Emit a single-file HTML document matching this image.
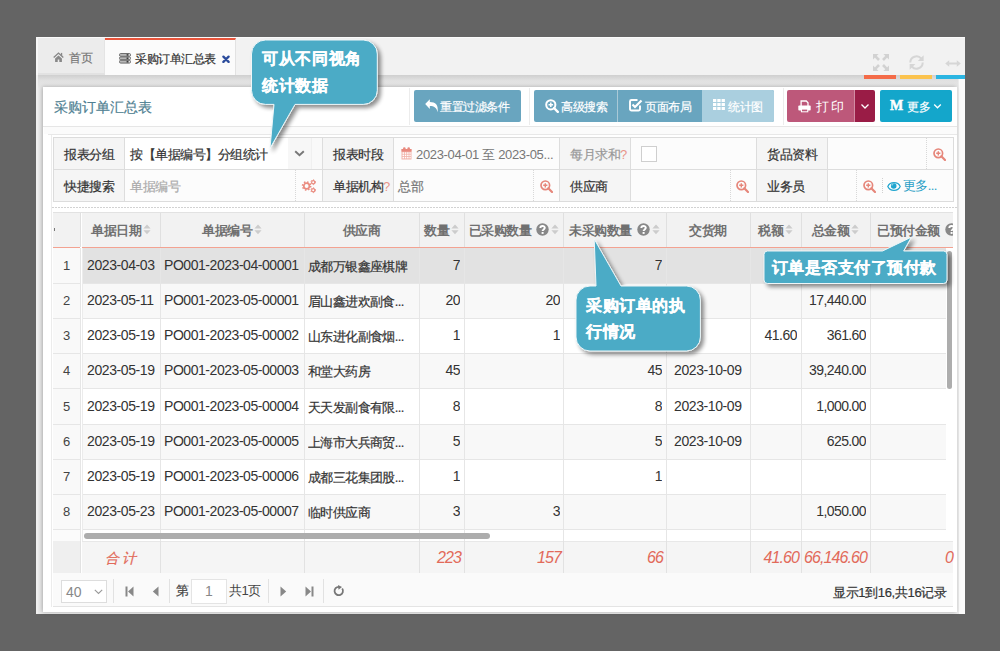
<!DOCTYPE html><html><head><meta charset="utf-8"><style>
*{box-sizing:border-box;margin:0;padding:0}
html,body{width:1000px;height:651px;overflow:hidden;background:#646464;font-family:"Liberation Sans",sans-serif;font-size:13px;color:#333}
.lbl,.cj{-webkit-text-stroke:0.2px currentColor}
div,span,svg{position:absolute}
.t{white-space:nowrap;line-height:20px}
.cj{letter-spacing:-0.5px}
.btn{color:#fff;font-size:12px;line-height:32px;border-radius:2px;white-space:nowrap}
.lbl{background:#f5f5f5;color:#333;font-size:13px;line-height:33px;text-align:left;padding-left:10px;letter-spacing:-0.5px;white-space:nowrap}
.cell{white-space:nowrap;overflow:hidden;line-height:35px;font-size:13px;color:#333}
.th{white-space:nowrap;font-weight:bold;color:#707070;font-size:13px;line-height:35px;letter-spacing:-0.5px}
.ft{white-space:nowrap;font-style:italic;color:#e26a5a;font-size:16px;letter-spacing:-0.9px;line-height:33px;text-align:right}
.call{background:#4ba9c5;color:#fff;font-weight:bold;font-size:16px;white-space:nowrap}
.vl{width:1px;background:#dddddd}
.hl{height:1px;background:#dddddd}
</style></head><body>
<div style="left:36px;top:37px;width:929px;height:577px;background:#f2f2f2;border-top:1px solid #fafafa;border-left:2px solid #f7f7f7"></div>
<div style="left:38px;top:38px;width:67px;height:37px;background:#ececec;border-right:1px solid #e4e4e4;border-bottom:2px solid #e2e2e2"></div>
<div style="left:105px;top:38px;width:131px;height:37px;background:#fbfbfb;border-top:2px solid #e8553c;border-right:1px solid #e2e2e2"></div>
<div style="left:36px;top:75px;width:929px;height:539px;background:linear-gradient(#cfcfcf 0,#d9d9d9 3px,#e0e0e0 5px,#e6e6e6 11px,#ececec 14px);border-left:2px solid #f0f0f0"></div>
<div style="left:958px;top:79px;width:7px;height:535px;background:#fbfbfb;border-left:1px solid #ebebeb"></div>
<div style="left:43px;top:87px;width:914px;height:525px;background:#fff;box-shadow:-1px 0 4px rgba(0,0,0,.28)"></div>
<div style="left:864px;top:75px;width:32px;height:4px;background:#f46b48"></div>
<div style="left:900px;top:75px;width:32px;height:4px;background:#fbc34e"></div>
<div style="left:936px;top:75px;width:29px;height:4px;background:#2bb5e2"></div>
<svg style="left:53px;top:52px" width="11" height="11" viewBox="0 0 11 11"><path d="M0.7 5.6 L5.5 1.1 L10.3 5.6" fill="none" stroke="#888" stroke-width="1.4"/><rect x="7.9" y="0.9" width="1.3" height="3" fill="#888"/><path d="M2.1 6.6 L5.5 3.4 L8.9 6.6 V9.9 H6.3 V7.6 H4.7 V9.9 H2.1 Z" fill="#888"/></svg>
<div class="t cj" style="left:69px;top:48px;font-size:12px;color:#777">首页</div>
<svg style="left:119px;top:52.5px" width="12" height="11" viewBox="0 0 12 11"><rect x="0.5" y="0.5" width="11" height="2.8" rx="1.2" fill="#b8b8b8" stroke="#6e6e6e" stroke-width="1"/><rect x="7.6" y="1.1" width="1.8" height="1.6" fill="#3e3e3e"/><rect x="9.9" y="1.3" width="0.9" height="1.2" fill="#f0f0f0"/><rect x="0.5" y="3.9" width="11" height="2.8" rx="1.2" fill="#b8b8b8" stroke="#6e6e6e" stroke-width="1"/><rect x="7.6" y="4.5" width="1.8" height="1.6" fill="#3e3e3e"/><rect x="9.9" y="4.7" width="0.9" height="1.2" fill="#f0f0f0"/><rect x="0.5" y="7.3" width="11" height="2.8" rx="1.2" fill="#b8b8b8" stroke="#6e6e6e" stroke-width="1"/><rect x="7.6" y="7.8999999999999995" width="1.8" height="1.6" fill="#3e3e3e"/><rect x="9.9" y="8.1" width="0.9" height="1.2" fill="#f0f0f0"/></svg>
<div class="t cj" style="left:135px;top:49px;font-size:12px;color:#333">采购订单汇总表</div>
<svg style="left:221.5px;top:54.5px" width="8" height="8.5" viewBox="0 0 8 8.5"><path d="M1.4 1.6 L6.6 6.9 M6.6 1.6 L1.4 6.9" stroke="#2c4c9c" stroke-width="2.3" stroke-linecap="round"/></svg>
<svg style="left:872.5px;top:54px" width="16" height="17" viewBox="0 0 16 17"><g><path d="M0 0 H5.6 L0 5.6 Z" fill="#d2d2d2"/><path d="M2.2 2.2 L6 6" stroke="#d2d2d2" stroke-width="2.6"/></g><g transform="translate(16,0) scale(-1,1)"><path d="M0 0 H5.6 L0 5.6 Z" fill="#d2d2d2"/><path d="M2.2 2.2 L6 6" stroke="#d2d2d2" stroke-width="2.6"/></g><g transform="translate(0,17) scale(1,-1)"><path d="M0 0 H5.6 L0 5.6 Z" fill="#d2d2d2"/><path d="M2.2 2.2 L6 6" stroke="#d2d2d2" stroke-width="2.6"/></g><g transform="translate(16,17) scale(-1,-1)"><path d="M0 0 H5.6 L0 5.6 Z" fill="#d2d2d2"/><path d="M2.2 2.2 L6 6" stroke="#d2d2d2" stroke-width="2.6"/></g></svg>
<svg style="left:908.5px;top:53.5px" width="16" height="17" viewBox="0 0 16 17"><g fill="none" stroke="#d6d6d6" stroke-width="2"><path d="M1.3 8.5 A6.2 6.2 0 0 1 12.2 4.5"/><path d="M13.7 8.5 A6.2 6.2 0 0 1 2.8 12.5"/></g><path d="M14.6 1.2 V7 H8.8 Z" fill="#d6d6d6"/><path d="M0.6 15.8 V10 H6.4 Z" fill="#d6d6d6"/></svg>
<svg style="left:944.5px;top:59.5px" width="16" height="7" viewBox="0 0 16 7"><path d="M0.2 3.5 L4.2 0.2 V2.5 H11.8 V0.2 L15.8 3.5 L11.8 6.8 V4.5 H4.2 V6.8 Z" fill="#d6d6d6"/></svg>
<div class="t cj" style="left:54px;top:97px;font-size:14px;color:#4f7f92;letter-spacing:0">采购订单汇总表</div>
<div style="left:43px;top:126px;width:914px;height:1px;background:#e6e6e6"></div>
<div style="left:409px;top:88px;width:1px;height:37px;background:#ececec"></div>
<div style="left:529px;top:88px;width:1px;height:37px;background:#ececec"></div>
<div style="left:783px;top:88px;width:1px;height:37px;background:#ececec"></div>
<div class="btn" style="left:414px;top:90px;width:107px;height:32px;background:#69a5bf"></div>
<svg style="left:425px;top:99px" width="14" height="14" viewBox="0 0 14 14"><path d="M0.2 5 L4.8 0.2 V3.1 C10.5 3.1 13.6 6 12.6 13.2 C11.6 8.8 9.2 7 4.8 7 V9.9 Z" fill="#fff"/></svg>
<div class="t cj" style="left:440px;top:97px;font-size:12px;color:#fff">重置过滤条件</div>
<div class="btn" style="left:534px;top:90px;width:240px;height:32px;background:#69a5bf"></div>
<div style="left:617px;top:90px;width:1px;height:32px;background:#a9c9d7"></div>
<div style="left:702px;top:90px;width:72px;height:32px;background:#aacfdf;border-radius:0 2px 2px 0"></div>
<svg style="left:545px;top:99px" width="14" height="14" viewBox="0 0 14 14"><circle cx="5.8" cy="5.8" r="4.6" fill="none" stroke="#fff" stroke-width="2"/><path d="M9 9 L12.8 12.8" stroke="#fff" stroke-width="2.4" stroke-linecap="round"/><path d="M5.8 3.5 V8.1 M3.5 5.8 H8.1" stroke="#fff" stroke-width="1.5"/></svg>
<div class="t cj" style="left:561px;top:97px;font-size:12px;color:#fff">高级搜索</div>
<svg style="left:629px;top:98px" width="14" height="14" viewBox="0 0 14 14"><path d="M11 7.5 V11 A1.5 1.5 0 0 1 9.5 12.5 H2.5 A1.5 1.5 0 0 1 1 11 V3.5 A1.5 1.5 0 0 1 2.5 2 H8.5" fill="none" stroke="#fff" stroke-width="1.9"/><path d="M3.5 6.5 L6 9 L12.5 2.5" fill="none" stroke="#fff" stroke-width="2.2"/></svg>
<div class="t cj" style="left:645px;top:97px;font-size:12px;color:#fff">页面布局</div>
<svg style="left:713px;top:99px" width="12" height="11" viewBox="0 0 12 11"><g fill="#fff"><rect x="0" y="0" width="3.3" height="3"/><rect x="4.3" y="0" width="3.3" height="3"/><rect x="8.6" y="0" width="3.3" height="3"/><rect x="0" y="4" width="3.3" height="3"/><rect x="4.3" y="4" width="3.3" height="3"/><rect x="8.6" y="4" width="3.3" height="3"/><rect x="0" y="8" width="3.3" height="3"/><rect x="4.3" y="8" width="3.3" height="3"/><rect x="8.6" y="8" width="3.3" height="3"/></g></svg>
<div class="t cj" style="left:728px;top:97px;font-size:12px;color:#fff">统计图</div>
<div class="btn" style="left:787px;top:90px;width:67px;height:32px;background:#bd587a;border-radius:2px 0 0 2px"></div>
<div class="btn" style="left:854px;top:90px;width:21px;height:32px;background:#9a1c46;border-left:1px solid #d38ba3;border-radius:0 2px 2px 0"></div>
<svg style="left:797.5px;top:99.5px" width="13" height="13" viewBox="0 0 13 13"><path d="M3.1 6 V1 H8.3 L10 2.7 V6" fill="none" stroke="#fff" stroke-width="1.3"/><rect x="0.3" y="5.6" width="12.4" height="4.8" rx="0.9" fill="#fff"/><rect x="2.9" y="8.6" width="7.4" height="3.7" fill="#fff"/><rect x="4" y="9.6" width="5.2" height="1.7" fill="#bd587a"/></svg>
<div class="t" style="left:816px;top:97px;font-size:13px;color:#fff;letter-spacing:2px">打印</div>
<svg style="left:860px;top:103px" width="10" height="7" viewBox="0 0 10 7"><path d="M1.5 1.5 L5 5 L8.5 1.5" fill="none" stroke="#fff" stroke-width="1.3"/></svg>
<div class="btn" style="left:880px;top:90px;width:72px;height:32px;background:#14a6cb"></div>
<div class="t" style="left:890px;top:96px;font-size:14px;color:#fff;font-family:'Liberation Serif',serif;font-weight:bold;-webkit-text-stroke:0.5px #fff">M</div>
<div class="t cj" style="left:907px;top:97px;font-size:12px;color:#fff">更多</div>
<svg style="left:933px;top:103px" width="9" height="7" viewBox="0 0 9 7"><path d="M1.2 1.5 L4.5 4.8 L7.8 1.5" fill="none" stroke="#fff" stroke-width="1.3"/></svg>
<div style="left:44px;top:127px;width:913px;height:7px;background:#fbfbfb"></div>
<div style="left:48px;top:134px;width:909px;height:1px;background:#e8e8e8"></div>
<div style="left:51px;top:135px;width:1px;height:472px;background:#ececec"></div>
<div style="left:53px;top:137px;width:901px;height:65px;border:1px solid #dcdcdc;background:#fcfcfc"></div>
<div style="left:52px;top:207px;width:905px;height:1px;background:repeating-linear-gradient(90deg,#d2d2d2 0 2px,transparent 2px 3px)"></div>
<div class="lbl" style="left:54px;top:138px;width:70px;height:31px;color:#333">报表分组</div>
<div class="lbl" style="left:54px;top:170px;width:70px;height:31px;color:#333">快捷搜索</div>
<div class="lbl" style="left:323px;top:138px;width:70px;height:31px;color:#333">报表时段</div>
<div class="lbl" style="left:323px;top:170px;width:70px;height:31px;color:#333">单据机构<span style="position:static;color:#e8958a;-webkit-text-stroke:0">?</span></div>
<div class="lbl" style="left:560px;top:138px;width:70px;height:31px;color:#999">每月求和<span style="position:static;color:#e8958a;-webkit-text-stroke:0">?</span></div>
<div class="lbl" style="left:560px;top:170px;width:70px;height:31px;color:#333">供应商</div>
<div class="lbl" style="left:757px;top:138px;width:70px;height:31px;color:#333">货品资料</div>
<div class="lbl" style="left:757px;top:170px;width:70px;height:31px;color:#333">业务员</div>
<div style="left:54px;top:169px;width:899px;height:1px;background:#dddddd"></div>
<div style="left:124px;top:138px;width:1px;height:63px;background:#dddddd"></div>
<div style="left:322px;top:138px;width:1px;height:63px;background:#dddddd"></div>
<div style="left:393px;top:138px;width:1px;height:63px;background:#dddddd"></div>
<div style="left:559px;top:138px;width:1px;height:63px;background:#dddddd"></div>
<div style="left:630px;top:138px;width:1px;height:63px;background:#dddddd"></div>
<div style="left:756px;top:138px;width:1px;height:63px;background:#dddddd"></div>
<div style="left:827px;top:138px;width:1px;height:63px;background:#dddddd"></div>
<div style="left:125px;top:138px;width:197px;height:31px;background:#fff"></div>
<div class="t cj" style="left:130px;top:145px;font-size:13px;color:#333">按【单据编号】分组统计</div>
<div style="left:288px;top:138px;width:23px;height:31px;background:#f7f7f7"></div>
<div style="left:311px;top:138px;width:11px;height:31px;background:#f9f9f9;border-left:1px solid #f0f0f0"></div>
<svg style="left:294px;top:150px" width="11" height="7" viewBox="0 0 11 7"><path d="M1.2 1.2 L5.5 5.3 L9.8 1.2" fill="none" stroke="#777" stroke-width="1.9"/></svg>
<div style="left:295px;top:170px;width:0;height:31px;border-left:1px dotted #d8d8d8"></div>
<div style="left:533px;top:170px;width:0;height:31px;border-left:1px dotted #d8d8d8"></div>
<div style="left:730px;top:170px;width:0;height:31px;border-left:1px dotted #d8d8d8"></div>
<div style="left:926px;top:138px;width:0;height:31px;border-left:1px dotted #d8d8d8"></div>
<div style="left:856px;top:170px;width:0;height:31px;border-left:1px dotted #d8d8d8"></div>
<div class="t cj" style="left:130px;top:177px;font-size:13px;color:#aaa">单据编号</div>
<svg style="left:300px;top:179px" width="16" height="15" viewBox="0 0 16 15"><g fill="none" stroke="#ea8c80"><circle cx="6.6" cy="7" r="2.8" stroke-width="1.7"/><circle cx="6.6" cy="7" r="4.1" stroke-width="1.5" stroke-dasharray="1.5 1.72"/><circle cx="13.2" cy="3.2" r="1.6" stroke-width="1.2"/><circle cx="13.2" cy="3.2" r="2.4" stroke-width="1" stroke-dasharray="1.1 1.4"/><circle cx="13.2" cy="11.2" r="1.6" stroke-width="1.2"/><circle cx="13.2" cy="11.2" r="2.4" stroke-width="1" stroke-dasharray="1.1 1.4"/></g></svg>
<div style="left:882px;top:178px;width:0;height:15px;border-left:1px dotted #d0d0d0"></div>
<svg style="left:401px;top:147px" width="11" height="13" viewBox="0 0 11 13"><rect x="0.5" y="2" width="10" height="10.5" rx="0.6" fill="#f2b3a9"/><rect x="0.5" y="2" width="10" height="2.6" fill="#e8897e"/><g fill="#fff"><rect x="1.5" y="5.3" width="1.5" height="1.5"/><rect x="3.8" y="5.3" width="1.5" height="1.5"/><rect x="6.1" y="5.3" width="1.5" height="1.5"/><rect x="8.4" y="5.3" width="1.3" height="1.5"/><rect x="1.5" y="7.6" width="1.5" height="1.5"/><rect x="3.8" y="7.6" width="1.5" height="1.5"/><rect x="6.1" y="7.6" width="1.5" height="1.5"/><rect x="8.4" y="7.6" width="1.3" height="1.5"/><rect x="1.5" y="9.9" width="1.5" height="1.5"/><rect x="3.8" y="9.9" width="1.5" height="1.5"/><rect x="6.1" y="9.9" width="1.5" height="1.5"/><rect x="8.4" y="9.9" width="1.3" height="1.5"/></g><circle cx="3.3" cy="1.6" r="1.3" fill="#e8897e"/><circle cx="7.7" cy="1.6" r="1.3" fill="#e8897e"/></svg>
<div class="t" style="left:416px;top:145px;font-size:13px;color:#777;letter-spacing:-0.35px">2023-04-01 至 2023-05...</div>
<div style="left:641px;top:146px;width:16px;height:16px;border:1px solid #cfcfcf;background:#fff"></div>
<svg style="left:540px;top:180px" width="13" height="13" viewBox="0 0 13 13"><circle cx="5.3" cy="5.3" r="4.3" fill="none" stroke="#e6867a" stroke-width="1.7"/><path d="M8.3 8.3 L12 12" stroke="#e6867a" stroke-width="2.2" stroke-linecap="round"/><path d="M5.3 3.2 V7.4 M3.2 5.3 H7.4" stroke="#e6867a" stroke-width="1.4"/></svg>
<svg style="left:736px;top:180px" width="13" height="13" viewBox="0 0 13 13"><circle cx="5.3" cy="5.3" r="4.3" fill="none" stroke="#e6867a" stroke-width="1.7"/><path d="M8.3 8.3 L12 12" stroke="#e6867a" stroke-width="2.2" stroke-linecap="round"/><path d="M5.3 3.2 V7.4 M3.2 5.3 H7.4" stroke="#e6867a" stroke-width="1.4"/></svg>
<svg style="left:933px;top:148px" width="13" height="13" viewBox="0 0 13 13"><circle cx="5.3" cy="5.3" r="4.3" fill="none" stroke="#e6867a" stroke-width="1.7"/><path d="M8.3 8.3 L12 12" stroke="#e6867a" stroke-width="2.2" stroke-linecap="round"/><path d="M5.3 3.2 V7.4 M3.2 5.3 H7.4" stroke="#e6867a" stroke-width="1.4"/></svg>
<svg style="left:863px;top:180px" width="13" height="13" viewBox="0 0 13 13"><circle cx="5.3" cy="5.3" r="4.3" fill="none" stroke="#e6867a" stroke-width="1.7"/><path d="M8.3 8.3 L12 12" stroke="#e6867a" stroke-width="2.2" stroke-linecap="round"/><path d="M5.3 3.2 V7.4 M3.2 5.3 H7.4" stroke="#e6867a" stroke-width="1.4"/></svg>
<div class="t cj" style="left:398px;top:177px;font-size:13px;color:#777">总部</div>
<svg style="left:886.5px;top:181px" width="14" height="11" viewBox="0 0 14 11"><path d="M0.8 5.5 C3 0.4 11 0.4 13.2 5.5 C11 10.6 3 10.6 0.8 5.5 Z" fill="none" stroke="#1fa5cf" stroke-width="1.2"/><circle cx="6.7" cy="5" r="2.8" fill="#1fa5cf"/><path d="M5 4.6 A1.8 1.8 0 0 1 6.4 3" fill="none" stroke="#bfe6f2" stroke-width="0.8"/></svg>
<div class="t" style="left:903px;top:176px;font-size:13px;color:#2a9fc6;letter-spacing:-0.6px">更多...</div>
<div style="left:53px;top:212px;width:900px;height:35px;background:#f2f2f2;border-top:1px solid #e2e2e2"></div>
<div style="left:53px;top:247px;width:900px;height:1px;background:#f3a291"></div>
<div style="left:80px;top:247px;width:2px;height:1px;background:#fff"></div>
<div style="left:54px;top:228px;width:1px;height:3px;background:#777"></div>
<div style="left:80px;top:213px;width:1px;height:34px;background:#e0e0e0"></div>
<div style="left:160px;top:213px;width:1px;height:34px;background:#e0e0e0"></div>
<div style="left:304px;top:213px;width:1px;height:34px;background:#e0e0e0"></div>
<div style="left:419px;top:213px;width:1px;height:34px;background:#e0e0e0"></div>
<div style="left:464px;top:213px;width:1px;height:34px;background:#e0e0e0"></div>
<div style="left:563px;top:213px;width:1px;height:34px;background:#e0e0e0"></div>
<div style="left:666px;top:213px;width:1px;height:34px;background:#e0e0e0"></div>
<div style="left:750px;top:213px;width:1px;height:34px;background:#e0e0e0"></div>
<div style="left:801px;top:213px;width:1px;height:34px;background:#e0e0e0"></div>
<div style="left:870px;top:213px;width:1px;height:34px;background:#e0e0e0"></div>
<div style="left:81px;top:213px;width:1px;height:34px;background:#fff"></div>
<div style="left:53px;top:248px;width:27px;height:36px;background:#f9f9f9;border-bottom:1px solid #e6e6e6"></div>
<div style="left:82px;top:248px;width:864px;height:36px;background:#e2e2e2;border-bottom:1px solid #e6e6e6"></div>
<div class="cell" style="left:53px;top:248px;width:27px;text-align:center;color:#444">1</div>
<div class="cell" style="left:87px;top:248px;width:73px;color:#333;font-size:14px;letter-spacing:-0.4px">2023-04-03</div>
<div class="cell" style="left:164px;top:248px;width:140px;color:#333;font-size:14px;letter-spacing:-0.45px">PO001-2023-04-00001</div>
<div class="cell" style="left:308px;top:249px;width:111px;color:#333;letter-spacing:-0.6px;-webkit-text-stroke:0.2px #333">成都万银鑫座棋牌</div>
<div class="cell" style="left:419px;top:248px;width:41px;text-align:right;font-size:14px;letter-spacing:-0.5px">7</div>
<div class="cell" style="left:464px;top:248px;width:96px;text-align:right;font-size:14px;letter-spacing:-0.5px"></div>
<div class="cell" style="left:563px;top:248px;width:99px;text-align:right;font-size:14px;letter-spacing:-0.5px">7</div>
<div class="cell" style="left:674px;top:248px;width:76px;font-size:14px;letter-spacing:-0.4px"></div>
<div class="cell" style="left:750px;top:248px;width:47px;text-align:right;font-size:14px;letter-spacing:-0.5px"></div>
<div class="cell" style="left:801px;top:248px;width:65px;text-align:right;font-size:14px;letter-spacing:-0.6px"></div>
<div style="left:53px;top:284px;width:27px;height:35px;background:#f9f9f9;border-bottom:1px solid #e6e6e6"></div>
<div style="left:82px;top:284px;width:864px;height:35px;background:#f8f8f8;border-bottom:1px solid #e6e6e6"></div>
<div class="cell" style="left:53px;top:283px;width:27px;text-align:center;color:#444">2</div>
<div class="cell" style="left:87px;top:283px;width:73px;color:#333;font-size:14px;letter-spacing:-0.4px">2023-05-11</div>
<div class="cell" style="left:164px;top:283px;width:140px;color:#333;font-size:14px;letter-spacing:-0.45px">PO001-2023-05-00001</div>
<div class="cell" style="left:308px;top:284px;width:111px;color:#333;letter-spacing:-0.6px;-webkit-text-stroke:0.2px #333">眉山鑫进欢副食...</div>
<div class="cell" style="left:419px;top:283px;width:41px;text-align:right;font-size:14px;letter-spacing:-0.5px">20</div>
<div class="cell" style="left:464px;top:283px;width:96px;text-align:right;font-size:14px;letter-spacing:-0.5px">20</div>
<div class="cell" style="left:563px;top:283px;width:99px;text-align:right;font-size:14px;letter-spacing:-0.5px"></div>
<div class="cell" style="left:674px;top:283px;width:76px;font-size:14px;letter-spacing:-0.4px"></div>
<div class="cell" style="left:750px;top:283px;width:47px;text-align:right;font-size:14px;letter-spacing:-0.5px"></div>
<div class="cell" style="left:801px;top:283px;width:65px;text-align:right;font-size:14px;letter-spacing:-0.6px">17,440.00</div>
<div style="left:53px;top:319px;width:27px;height:35px;background:#f9f9f9;border-bottom:1px solid #e6e6e6"></div>
<div style="left:82px;top:319px;width:864px;height:35px;background:#ffffff;border-bottom:1px solid #e6e6e6"></div>
<div class="cell" style="left:53px;top:318px;width:27px;text-align:center;color:#444">3</div>
<div class="cell" style="left:87px;top:318px;width:73px;color:#333;font-size:14px;letter-spacing:-0.4px">2023-05-19</div>
<div class="cell" style="left:164px;top:318px;width:140px;color:#333;font-size:14px;letter-spacing:-0.45px">PO001-2023-05-00002</div>
<div class="cell" style="left:308px;top:319px;width:111px;color:#333;letter-spacing:-0.6px;-webkit-text-stroke:0.2px #333">山东进化副食烟...</div>
<div class="cell" style="left:419px;top:318px;width:41px;text-align:right;font-size:14px;letter-spacing:-0.5px">1</div>
<div class="cell" style="left:464px;top:318px;width:96px;text-align:right;font-size:14px;letter-spacing:-0.5px">1</div>
<div class="cell" style="left:563px;top:318px;width:99px;text-align:right;font-size:14px;letter-spacing:-0.5px"></div>
<div class="cell" style="left:674px;top:318px;width:76px;font-size:14px;letter-spacing:-0.4px"></div>
<div class="cell" style="left:750px;top:318px;width:47px;text-align:right;font-size:14px;letter-spacing:-0.5px">41.60</div>
<div class="cell" style="left:801px;top:318px;width:65px;text-align:right;font-size:14px;letter-spacing:-0.6px">361.60</div>
<div style="left:53px;top:354px;width:27px;height:35px;background:#f9f9f9;border-bottom:1px solid #e6e6e6"></div>
<div style="left:82px;top:354px;width:864px;height:35px;background:#f8f8f8;border-bottom:1px solid #e6e6e6"></div>
<div class="cell" style="left:53px;top:353px;width:27px;text-align:center;color:#444">4</div>
<div class="cell" style="left:87px;top:353px;width:73px;color:#333;font-size:14px;letter-spacing:-0.4px">2023-05-19</div>
<div class="cell" style="left:164px;top:353px;width:140px;color:#333;font-size:14px;letter-spacing:-0.45px">PO001-2023-05-00003</div>
<div class="cell" style="left:308px;top:354px;width:111px;color:#333;letter-spacing:-0.6px;-webkit-text-stroke:0.2px #333">和堂大药房</div>
<div class="cell" style="left:419px;top:353px;width:41px;text-align:right;font-size:14px;letter-spacing:-0.5px">45</div>
<div class="cell" style="left:464px;top:353px;width:96px;text-align:right;font-size:14px;letter-spacing:-0.5px"></div>
<div class="cell" style="left:563px;top:353px;width:99px;text-align:right;font-size:14px;letter-spacing:-0.5px">45</div>
<div class="cell" style="left:674px;top:353px;width:76px;font-size:14px;letter-spacing:-0.4px">2023-10-09</div>
<div class="cell" style="left:750px;top:353px;width:47px;text-align:right;font-size:14px;letter-spacing:-0.5px"></div>
<div class="cell" style="left:801px;top:353px;width:65px;text-align:right;font-size:14px;letter-spacing:-0.6px">39,240.00</div>
<div style="left:53px;top:389px;width:27px;height:36px;background:#f9f9f9;border-bottom:1px solid #e6e6e6"></div>
<div style="left:82px;top:389px;width:864px;height:36px;background:#ffffff;border-bottom:1px solid #e6e6e6"></div>
<div class="cell" style="left:53px;top:389px;width:27px;text-align:center;color:#444">5</div>
<div class="cell" style="left:87px;top:389px;width:73px;color:#333;font-size:14px;letter-spacing:-0.4px">2023-05-19</div>
<div class="cell" style="left:164px;top:389px;width:140px;color:#333;font-size:14px;letter-spacing:-0.45px">PO001-2023-05-00004</div>
<div class="cell" style="left:308px;top:390px;width:111px;color:#333;letter-spacing:-0.6px;-webkit-text-stroke:0.2px #333">天天发副食有限...</div>
<div class="cell" style="left:419px;top:389px;width:41px;text-align:right;font-size:14px;letter-spacing:-0.5px">8</div>
<div class="cell" style="left:464px;top:389px;width:96px;text-align:right;font-size:14px;letter-spacing:-0.5px"></div>
<div class="cell" style="left:563px;top:389px;width:99px;text-align:right;font-size:14px;letter-spacing:-0.5px">8</div>
<div class="cell" style="left:674px;top:389px;width:76px;font-size:14px;letter-spacing:-0.4px">2023-10-09</div>
<div class="cell" style="left:750px;top:389px;width:47px;text-align:right;font-size:14px;letter-spacing:-0.5px"></div>
<div class="cell" style="left:801px;top:389px;width:65px;text-align:right;font-size:14px;letter-spacing:-0.6px">1,000.00</div>
<div style="left:53px;top:425px;width:27px;height:35px;background:#f9f9f9;border-bottom:1px solid #e6e6e6"></div>
<div style="left:82px;top:425px;width:864px;height:35px;background:#f8f8f8;border-bottom:1px solid #e6e6e6"></div>
<div class="cell" style="left:53px;top:424px;width:27px;text-align:center;color:#444">6</div>
<div class="cell" style="left:87px;top:424px;width:73px;color:#333;font-size:14px;letter-spacing:-0.4px">2023-05-19</div>
<div class="cell" style="left:164px;top:424px;width:140px;color:#333;font-size:14px;letter-spacing:-0.45px">PO001-2023-05-00005</div>
<div class="cell" style="left:308px;top:425px;width:111px;color:#333;letter-spacing:-0.6px;-webkit-text-stroke:0.2px #333">上海市大兵商贸...</div>
<div class="cell" style="left:419px;top:424px;width:41px;text-align:right;font-size:14px;letter-spacing:-0.5px">5</div>
<div class="cell" style="left:464px;top:424px;width:96px;text-align:right;font-size:14px;letter-spacing:-0.5px"></div>
<div class="cell" style="left:563px;top:424px;width:99px;text-align:right;font-size:14px;letter-spacing:-0.5px">5</div>
<div class="cell" style="left:674px;top:424px;width:76px;font-size:14px;letter-spacing:-0.4px">2023-10-09</div>
<div class="cell" style="left:750px;top:424px;width:47px;text-align:right;font-size:14px;letter-spacing:-0.5px"></div>
<div class="cell" style="left:801px;top:424px;width:65px;text-align:right;font-size:14px;letter-spacing:-0.6px">625.00</div>
<div style="left:53px;top:460px;width:27px;height:35px;background:#f9f9f9;border-bottom:1px solid #e6e6e6"></div>
<div style="left:82px;top:460px;width:864px;height:35px;background:#ffffff;border-bottom:1px solid #e6e6e6"></div>
<div class="cell" style="left:53px;top:459px;width:27px;text-align:center;color:#444">7</div>
<div class="cell" style="left:87px;top:459px;width:73px;color:#333;font-size:14px;letter-spacing:-0.4px">2023-05-19</div>
<div class="cell" style="left:164px;top:459px;width:140px;color:#333;font-size:14px;letter-spacing:-0.45px">PO001-2023-05-00006</div>
<div class="cell" style="left:308px;top:460px;width:111px;color:#333;letter-spacing:-0.6px;-webkit-text-stroke:0.2px #333">成都三花集团股...</div>
<div class="cell" style="left:419px;top:459px;width:41px;text-align:right;font-size:14px;letter-spacing:-0.5px">1</div>
<div class="cell" style="left:464px;top:459px;width:96px;text-align:right;font-size:14px;letter-spacing:-0.5px"></div>
<div class="cell" style="left:563px;top:459px;width:99px;text-align:right;font-size:14px;letter-spacing:-0.5px">1</div>
<div class="cell" style="left:674px;top:459px;width:76px;font-size:14px;letter-spacing:-0.4px"></div>
<div class="cell" style="left:750px;top:459px;width:47px;text-align:right;font-size:14px;letter-spacing:-0.5px"></div>
<div class="cell" style="left:801px;top:459px;width:65px;text-align:right;font-size:14px;letter-spacing:-0.6px"></div>
<div style="left:53px;top:495px;width:27px;height:35px;background:#f9f9f9;border-bottom:1px solid #e6e6e6"></div>
<div style="left:82px;top:495px;width:864px;height:35px;background:#f8f8f8;border-bottom:1px solid #e6e6e6"></div>
<div class="cell" style="left:53px;top:494px;width:27px;text-align:center;color:#444">8</div>
<div class="cell" style="left:87px;top:494px;width:73px;color:#333;font-size:14px;letter-spacing:-0.4px">2023-05-23</div>
<div class="cell" style="left:164px;top:494px;width:140px;color:#333;font-size:14px;letter-spacing:-0.45px">PO001-2023-05-00007</div>
<div class="cell" style="left:308px;top:495px;width:111px;color:#333;letter-spacing:-0.6px;-webkit-text-stroke:0.2px #333">临时供应商</div>
<div class="cell" style="left:419px;top:494px;width:41px;text-align:right;font-size:14px;letter-spacing:-0.5px">3</div>
<div class="cell" style="left:464px;top:494px;width:96px;text-align:right;font-size:14px;letter-spacing:-0.5px">3</div>
<div class="cell" style="left:563px;top:494px;width:99px;text-align:right;font-size:14px;letter-spacing:-0.5px"></div>
<div class="cell" style="left:674px;top:494px;width:76px;font-size:14px;letter-spacing:-0.4px"></div>
<div class="cell" style="left:750px;top:494px;width:47px;text-align:right;font-size:14px;letter-spacing:-0.5px"></div>
<div class="cell" style="left:801px;top:494px;width:65px;text-align:right;font-size:14px;letter-spacing:-0.6px">1,050.00</div>
<div style="left:82px;top:530px;width:871px;height:11px;background:#fff"></div>
<div style="left:80px;top:248px;width:1px;height:293px;background:#e6e6e6"></div>
<div style="left:160px;top:248px;width:1px;height:293px;background:#e6e6e6"></div>
<div style="left:304px;top:248px;width:1px;height:293px;background:#e6e6e6"></div>
<div style="left:419px;top:248px;width:1px;height:293px;background:#e6e6e6"></div>
<div style="left:464px;top:248px;width:1px;height:293px;background:#e6e6e6"></div>
<div style="left:563px;top:248px;width:1px;height:293px;background:#e6e6e6"></div>
<div style="left:666px;top:248px;width:1px;height:293px;background:#e6e6e6"></div>
<div style="left:750px;top:248px;width:1px;height:293px;background:#e6e6e6"></div>
<div style="left:801px;top:248px;width:1px;height:293px;background:#e6e6e6"></div>
<div style="left:870px;top:248px;width:1px;height:293px;background:#e6e6e6"></div>
<div style="left:81px;top:248px;width:1px;height:293px;background:#fff"></div>
<div style="left:82px;top:248px;width:1px;height:293px;background:#ececec"></div>
<div style="left:53px;top:530px;width:27px;height:11px;background:#fbfbfb"></div>
<div style="left:946px;top:248px;width:7px;height:282px;background:#fff"></div>
<div style="left:947px;top:251px;width:5px;height:138px;background:#adadad;border-radius:3px"></div>
<div style="left:84px;top:533px;width:406px;height:6px;background:#adadad;border-radius:3px"></div>
<div style="left:53px;top:541px;width:900px;height:33px;background:#f5f5f5;border-top:1px solid #e8e8e8;border-bottom:1px solid #e4e4e4"></div>
<div style="left:53px;top:541px;width:27px;height:32px;background:#efefef"></div>
<div style="left:80px;top:541px;width:1px;height:32px;background:#e2e2e2"></div>
<div style="left:160px;top:541px;width:1px;height:32px;background:#e2e2e2"></div>
<div style="left:304px;top:541px;width:1px;height:32px;background:#e2e2e2"></div>
<div style="left:419px;top:541px;width:1px;height:32px;background:#e2e2e2"></div>
<div style="left:464px;top:541px;width:1px;height:32px;background:#e2e2e2"></div>
<div style="left:563px;top:541px;width:1px;height:32px;background:#e2e2e2"></div>
<div style="left:666px;top:541px;width:1px;height:32px;background:#e2e2e2"></div>
<div style="left:750px;top:541px;width:1px;height:32px;background:#e2e2e2"></div>
<div style="left:801px;top:541px;width:1px;height:32px;background:#e2e2e2"></div>
<div style="left:870px;top:541px;width:1px;height:32px;background:#e2e2e2"></div>
<div style="left:81px;top:541px;width:1px;height:32px;background:#fff"></div>
<div class="ft cj" style="left:83px;top:542px;width:78px;text-align:center;font-size:14px;letter-spacing:3px;color:#e26a5a">合计</div>
<div class="ft" style="left:419px;top:541px;width:42px">223</div>
<div class="ft" style="left:464px;top:541px;width:97px">157</div>
<div class="ft" style="left:563px;top:541px;width:100px">66</div>
<div class="ft" style="left:750px;top:541px;width:49px">41.60</div>
<div class="ft" style="left:801px;top:541px;width:66px">66,146.60</div>
<div class="ft" style="left:870px;top:541px;width:83px">0</div>
<div style="left:53px;top:573px;width:900px;height:34px;background:#fafafa;border-bottom:1px solid #e4e4e4"></div>
<div style="left:61px;top:580px;width:46px;height:23px;border:1px solid #dddddd;background:#fff"></div>
<div class="t" style="left:66px;top:582px;font-size:14px;color:#888">40</div>
<svg style="left:94px;top:589px" width="9" height="6" viewBox="0 0 9 6"><path d="M0.8 0.8 L4.5 4.5 L8.2 0.8" fill="none" stroke="#999" stroke-width="1.1"/></svg>
<div style="left:113px;top:579px;width:1px;height:24px;background:#e2e2e2"></div>
<div style="left:169px;top:579px;width:1px;height:24px;background:#e2e2e2"></div>
<div style="left:268px;top:579px;width:1px;height:24px;background:#e2e2e2"></div>
<div style="left:323px;top:579px;width:1px;height:24px;background:#e2e2e2"></div>
<svg style="left:125px;top:586px" width="9" height="11" viewBox="0 0 9 11"><rect x="0.5" y="0.5" width="2" height="10" fill="#888"/><path d="M8.5 0.5 V10.5 L3 5.5 Z" fill="#888"/></svg>
<svg style="left:152px;top:586px" width="7" height="11" viewBox="0 0 7 11"><path d="M6.5 0.5 V10.5 L0.8 5.5 Z" fill="#888"/></svg>
<div class="t cj" style="left:176px;top:581px;font-size:13px;color:#444">第</div>
<div style="left:191px;top:579px;width:36px;height:25px;border:1px solid #e4e4e4;background:#fff"></div>
<div class="t" style="left:191px;top:581px;width:36px;text-align:center;font-size:14px;color:#888">1</div>
<div class="t" style="left:229px;top:581px;font-size:13px;color:#444;letter-spacing:-0.5px">共1页</div>
<svg style="left:280px;top:586px" width="7" height="11" viewBox="0 0 7 11"><path d="M0.5 0.5 V10.5 L6.2 5.5 Z" fill="#888"/></svg>
<svg style="left:305px;top:586px" width="9" height="11" viewBox="0 0 9 11"><path d="M0.5 0.5 V10.5 L6 5.5 Z" fill="#888"/><rect x="6.5" y="0.5" width="2" height="10" fill="#888"/></svg>
<svg style="left:333px;top:585px" width="12" height="12" viewBox="0 0 12 12"><path d="M9.2 3.6 A4.2 4.2 0 1 1 6 1.8" fill="none" stroke="#777" stroke-width="1.8"/><path d="M5 0 L9 2 L5.5 4.8 Z" fill="#777"/></svg>
<div class="t cj" style="left:833px;top:583px;font-size:13px;color:#333;letter-spacing:-0.35px">显示1到16,共16记录</div>
<div class="th" style="left:82px;top:213px;width:78px;height:34px;display:flex;align-items:center;justify-content:center"><span style="position:static">单据日期</span><svg style="position:static;margin-left:2px;margin-top:-2px" width="8" height="11" viewBox="0 0 8 11"><path d="M4 0.5 L7.6 4.5 H0.4 Z M0.4 6.2 H7.6 L4 10.3 Z" fill="#cccccc"/></svg></div>
<div class="th" style="left:160px;top:213px;width:144px;height:34px;display:flex;align-items:center;justify-content:center"><span style="position:static">单据编号</span><svg style="position:static;margin-left:2px;margin-top:-2px" width="8" height="11" viewBox="0 0 8 11"><path d="M4 0.5 L7.6 4.5 H0.4 Z M0.4 6.2 H7.6 L4 10.3 Z" fill="#cccccc"/></svg></div>
<div class="th" style="left:304px;top:213px;width:115px;height:34px;display:flex;align-items:center;justify-content:center"><span style="position:static">供应商</span></div>
<div class="th" style="left:419px;top:213px;width:45px;height:34px;display:flex;align-items:center;justify-content:center"><span style="position:static">数量</span><svg style="position:static;margin-left:2px;margin-top:-2px" width="8" height="11" viewBox="0 0 8 11"><path d="M4 0.5 L7.6 4.5 H0.4 Z M0.4 6.2 H7.6 L4 10.3 Z" fill="#cccccc"/></svg></div>
<div class="th" style="left:464px;top:213px;width:100px;height:34px;display:flex;align-items:center;justify-content:center"><span style="position:static">已采购数量</span><svg style="position:static;margin-left:5px;margin-top:-2px" width="13" height="13" viewBox="0 0 13 13"><circle cx="6.5" cy="6.5" r="6.2" fill="#888"/><path d="M4.3 5 C4.3 2.3 8.8 2.3 8.8 4.8 C8.8 6.4 6.6 6.4 6.6 8" fill="none" stroke="#fff" stroke-width="1.9"/><rect x="5.6" y="9" width="2" height="1.9" fill="#fff"/></svg><svg style="position:static;margin-left:2px;margin-top:-2px" width="8" height="11" viewBox="0 0 8 11"><path d="M4 0.5 L7.6 4.5 H0.4 Z M0.4 6.2 H7.6 L4 10.3 Z" fill="#cccccc"/></svg></div>
<div class="th" style="left:563px;top:213px;width:103px;height:34px;display:flex;align-items:center;justify-content:center"><span style="position:static">未采购数量</span><svg style="position:static;margin-left:5px;margin-top:-2px" width="13" height="13" viewBox="0 0 13 13"><circle cx="6.5" cy="6.5" r="6.2" fill="#888"/><path d="M4.3 5 C4.3 2.3 8.8 2.3 8.8 4.8 C8.8 6.4 6.6 6.4 6.6 8" fill="none" stroke="#fff" stroke-width="1.9"/><rect x="5.6" y="9" width="2" height="1.9" fill="#fff"/></svg><svg style="position:static;margin-left:2px;margin-top:-2px" width="8" height="11" viewBox="0 0 8 11"><path d="M4 0.5 L7.6 4.5 H0.4 Z M0.4 6.2 H7.6 L4 10.3 Z" fill="#cccccc"/></svg></div>
<div class="th" style="left:666px;top:213px;width:84px;height:34px;display:flex;align-items:center;justify-content:center"><span style="position:static">交货期</span></div>
<div class="th" style="left:750px;top:213px;width:51px;height:34px;display:flex;align-items:center;justify-content:center"><span style="position:static">税额</span><svg style="position:static;margin-left:2px;margin-top:-2px" width="8" height="11" viewBox="0 0 8 11"><path d="M4 0.5 L7.6 4.5 H0.4 Z M0.4 6.2 H7.6 L4 10.3 Z" fill="#cccccc"/></svg></div>
<div class="th" style="left:801px;top:213px;width:69px;height:34px;display:flex;align-items:center;justify-content:center"><span style="position:static">总金额</span><svg style="position:static;margin-left:2px;margin-top:-2px" width="8" height="11" viewBox="0 0 8 11"><path d="M4 0.5 L7.6 4.5 H0.4 Z M0.4 6.2 H7.6 L4 10.3 Z" fill="#cccccc"/></svg></div>
<div style="left:870px;top:213px;width:83px;height:34px;overflow:hidden"><div class="th" style="left:7px;top:0;height:34px;display:flex;align-items:center"><span style="position:static">已预付金额</span><svg style="position:static;margin-left:5px;margin-top:-2px" width="13" height="13" viewBox="0 0 13 13"><circle cx="6.5" cy="6.5" r="6.2" fill="#888"/><path d="M4.3 5 C4.3 2.3 8.8 2.3 8.8 4.8 C8.8 6.4 6.6 6.4 6.6 8" fill="none" stroke="#fff" stroke-width="1.9"/><rect x="5.6" y="9" width="2" height="1.9" fill="#fff"/></svg></div></div>
<svg style="left:0;top:0" width="1000" height="651" viewBox="0 0 1000 651"><defs><filter id="sh" x="-20%" y="-20%" width="140%" height="140%"><feGaussianBlur in="SourceAlpha" stdDeviation="2"/><feOffset dx="3" dy="3"/><feComponentTransfer><feFuncA type="linear" slope="0.45"/></feComponentTransfer><feMerge><feMergeNode/><feMergeNode in="SourceGraphic"/></feMerge></filter></defs><path d="M265.5 40 H363.3 A14 14 0 0 1 377.3 54 V90.4 A14 14 0 0 1 363.3 104.4 H295 L270 148.3 L274 104.4 H265.5 A14 14 0 0 1 251.5 90.4 V54 A14 14 0 0 1 265.5 40 Z" fill="#4babc6" stroke="#eef6f8" stroke-width="1" filter="url(#sh)"/></svg>
<div class="t" style="left:262px;top:45px;font-size:16px;font-weight:bold;color:#fff;line-height:27px;white-space:normal;width:120px;letter-spacing:0.7px;-webkit-text-stroke:0.25px #fff">可从不同视角<br>统计数据</div>
<svg style="left:0;top:0" width="1000" height="651" viewBox="0 0 1000 651"><defs><filter id="sh" x="-20%" y="-20%" width="140%" height="140%"><feGaussianBlur in="SourceAlpha" stdDeviation="2"/><feOffset dx="3" dy="3"/><feComponentTransfer><feFuncA type="linear" slope="0.45"/></feComponentTransfer><feMerge><feMergeNode/><feMergeNode in="SourceGraphic"/></feMerge></filter></defs><path d="M590 286 H596 L594.2 239 L621 286 H686.4 A14 14 0 0 1 700.4 300 V337 A14 14 0 0 1 686.4 351 H590 A14 14 0 0 1 576 337 V300 A14 14 0 0 1 590 286 Z" fill="#4babc6" stroke="#eef6f8" stroke-width="1" filter="url(#sh)"/></svg>
<div class="t" style="left:586px;top:293px;font-size:16px;font-weight:bold;color:#fff;line-height:26px;white-space:normal;width:120px;letter-spacing:0.6px;-webkit-text-stroke:0.25px #fff">采购订单的执<br>行情况</div>
<svg style="left:0;top:0" width="1000" height="651" viewBox="0 0 1000 651"><defs><filter id="sh" x="-20%" y="-20%" width="140%" height="140%"><feGaussianBlur in="SourceAlpha" stdDeviation="2"/><feOffset dx="3" dy="3"/><feComponentTransfer><feFuncA type="linear" slope="0.45"/></feComponentTransfer><feMerge><feMergeNode/><feMergeNode in="SourceGraphic"/></feMerge></filter></defs><path d="M767.5 251 H882.5 L911.3 237.2 L903.7 251 H943.5 A3.5 3.5 0 0 1 947 254.5 V280 A3.5 3.5 0 0 1 943.5 283.5 H767.5 A3.5 3.5 0 0 1 764 280 V254.5 A3.5 3.5 0 0 1 767.5 251 Z" fill="#4babc6" stroke="#eef6f8" stroke-width="1" filter="url(#sh)"/></svg>
<div class="t" style="left:772px;top:258px;font-size:16px;font-weight:bold;color:#fff;line-height:20px;letter-spacing:0.45px;-webkit-text-stroke:0.25px #fff">订单是否支付了预付款</div>
</body></html>
